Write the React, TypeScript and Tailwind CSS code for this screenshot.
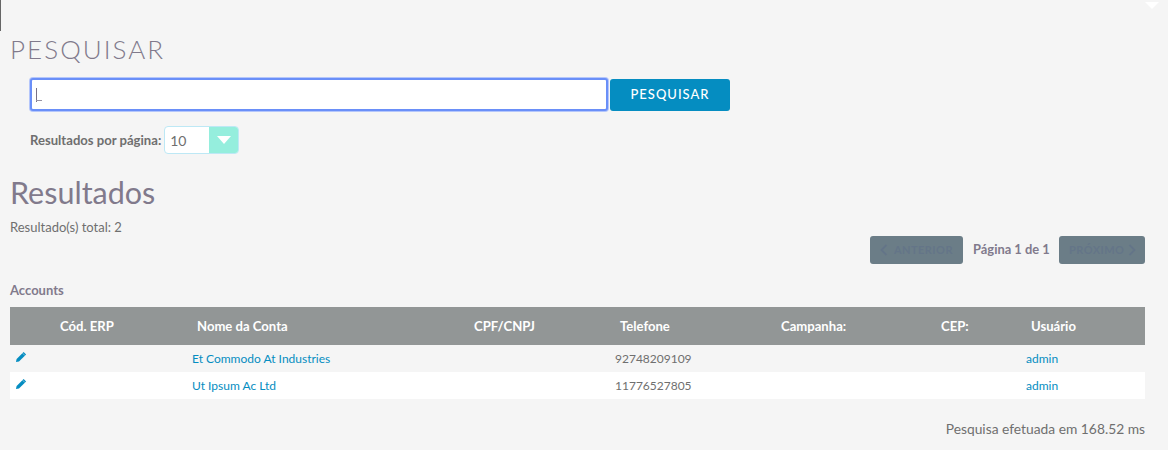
import React from "react";

const cols = "grid grid-cols-[40px_137px_277px_146px_161px_160px_90px_124px]";

function Pencil() {
  return (
    <svg width="12" height="12" viewBox="0 0 12 12" className="block">
      <path d="M8.6 0.9 L11.1 3.4 L4 10.4 L1 11 L1.6 8 Z" fill="#058dc1" />
      <path d="M7.6 2.2 L9.9 4.5" stroke="#f4f4f4" strokeWidth="0.5" />
    </svg>
  );
}

function Chevron({ left }: { left?: boolean }) {
  return (
    <svg width="8" height="12" viewBox="0 0 8 12" className="block shrink-0">
      <path d={left ? "M6.5 1 L1.5 6 L6.5 11" : "M1.5 1 L6.5 6 L1.5 11"} fill="none" stroke="#647588" strokeWidth="1.8" />
    </svg>
  );
}

function Row({ name, phone, white }: { name: string; phone: string; white?: boolean }) {
  return (
    <div className={`${cols} h-[27px] items-center text-[12px] ${white ? "bg-white" : ""}`}>
      <div className="pl-[5px] -mt-[3px]"><Pencil /></div>
      <div />
      <a className="pl-[5px] text-[#058dc1]">{name}</a>
      <div />
      <div className="pl-[5px] text-[#6f6f6f]">{phone}</div>
      <div />
      <div />
      <a className="pl-[5px] text-[#058dc1]">admin</a>
    </div>
  );
}

export default function App() {
  const heads = ["", "Cód. ERP", "Nome da Conta", "CPF/CNPJ", "Telefone", "Campanha:", "CEP:", "Usuário"];
  return (
    <div className="relative h-[450px] w-[1168px] overflow-hidden bg-[#f5f5f5] font-['Lato',sans-serif] text-[#6f6f6f]">
      <div className="absolute left-0 top-0 h-[31px] w-[1px] bg-[#666]" />
      <div className="absolute left-[1145px] top-[2px] h-0 w-0 border-x-[7px] border-t-[7px] border-x-transparent border-t-white" />
      <div className="pl-[10px] pr-[23px] pt-[34px]">
        <h1 className="h-[44px] text-[26px] font-light leading-[30px] tracking-[2.05px] text-[#817a8c]">PESQUISAR</h1>
        <div className="flex items-start pl-[20px]">
          <div className="flex h-[33px] w-[578px] items-center rounded-[3px] border-[2px] border-[#6a8ff8] bg-white pl-[4px] shadow-[0_0_0_1px_#b4c6fb]">
            <span className="relative h-[14px] w-[6px]">
              <span className="absolute left-0 top-0 h-[14px] w-[1px] bg-[#7a7285]" />
              <span className="absolute bottom-[1px] left-0 h-[1px] w-[6px] bg-[#9a94a3]" />
            </span>
          </div>
          <button className="ml-[2px] mt-[1px] h-[32px] w-[120px] rounded-[3px] bg-[#058dc1] text-[13px] font-medium tracking-[1px] text-white">PESQUISAR</button>
        </div>
        <div className="mt-[15px] flex h-[28px] items-center pl-[20px]">
          <span className="whitespace-nowrap pt-[1px] text-[13.1px] font-bold">Resultados por página:</span>
          <div className="ml-[3px] flex h-[28px] w-[75px] overflow-hidden rounded-[4px] border border-[#bde8f5] bg-white">
            <span className="flex-1 pl-[5px] text-[14px] leading-[28px]">10</span>
            <span className="flex w-[29px] items-center justify-center bg-[#95eedd]">
              <span className="h-0 w-0 border-x-[7px] border-t-[8px] border-x-transparent border-t-white" />
            </span>
          </div>
        </div>
        <h2 className="mt-[20px] h-[36px] text-[30.5px] font-normal leading-[36px] text-[#817a8c]">Resultados</h2>
        <p className="mt-[7px] h-[20px] text-[13px] leading-[20px]">Resultado(s) total: 2</p>
        <div className="mt-[-1px] flex h-[28px] items-center justify-end">
          <button className="flex h-[28px] w-[93px] items-center gap-[6px] rounded-[3px] bg-[#6b7d87] pl-[10px] text-[11px] font-bold tracking-[0.45px] text-[#647588]">
            <Chevron left />
            ANTERIOR
          </button>
          <span className="mx-[10px] w-[76px] whitespace-nowrap text-[12.9px] font-bold text-[#817a8c]">Página 1 de 1</span>
          <button className="flex h-[28px] w-[86px] items-center gap-[4px] rounded-[3px] bg-[#6b7d87] pl-[10px] text-[11px] font-bold tracking-[0.45px] text-[#647588]">
            PRÓXIMO
            <Chevron />
          </button>
        </div>
        <div className="mt-[17px] h-[26px] text-[13px] font-bold leading-[18px] text-[#817a8c]">Accounts</div>
        <div className={`${cols} h-[38px] items-center bg-[#929696] pt-[1px] text-[13.1px] font-bold text-white`}>
          {heads.map((h, i) => (
            <div key={i} className="pl-[10px]">{h}</div>
          ))}
        </div>
        <Row name="Et Commodo At Industries" phone="92748209109" />
        <Row name="Ut Ipsum Ac Ltd" phone="11776527805" white />
        <div className="mt-[20px] text-right text-[13.8px] leading-[20px]">Pesquisa efetuada em 168.52 ms</div>
      </div>
    </div>
  );
}
